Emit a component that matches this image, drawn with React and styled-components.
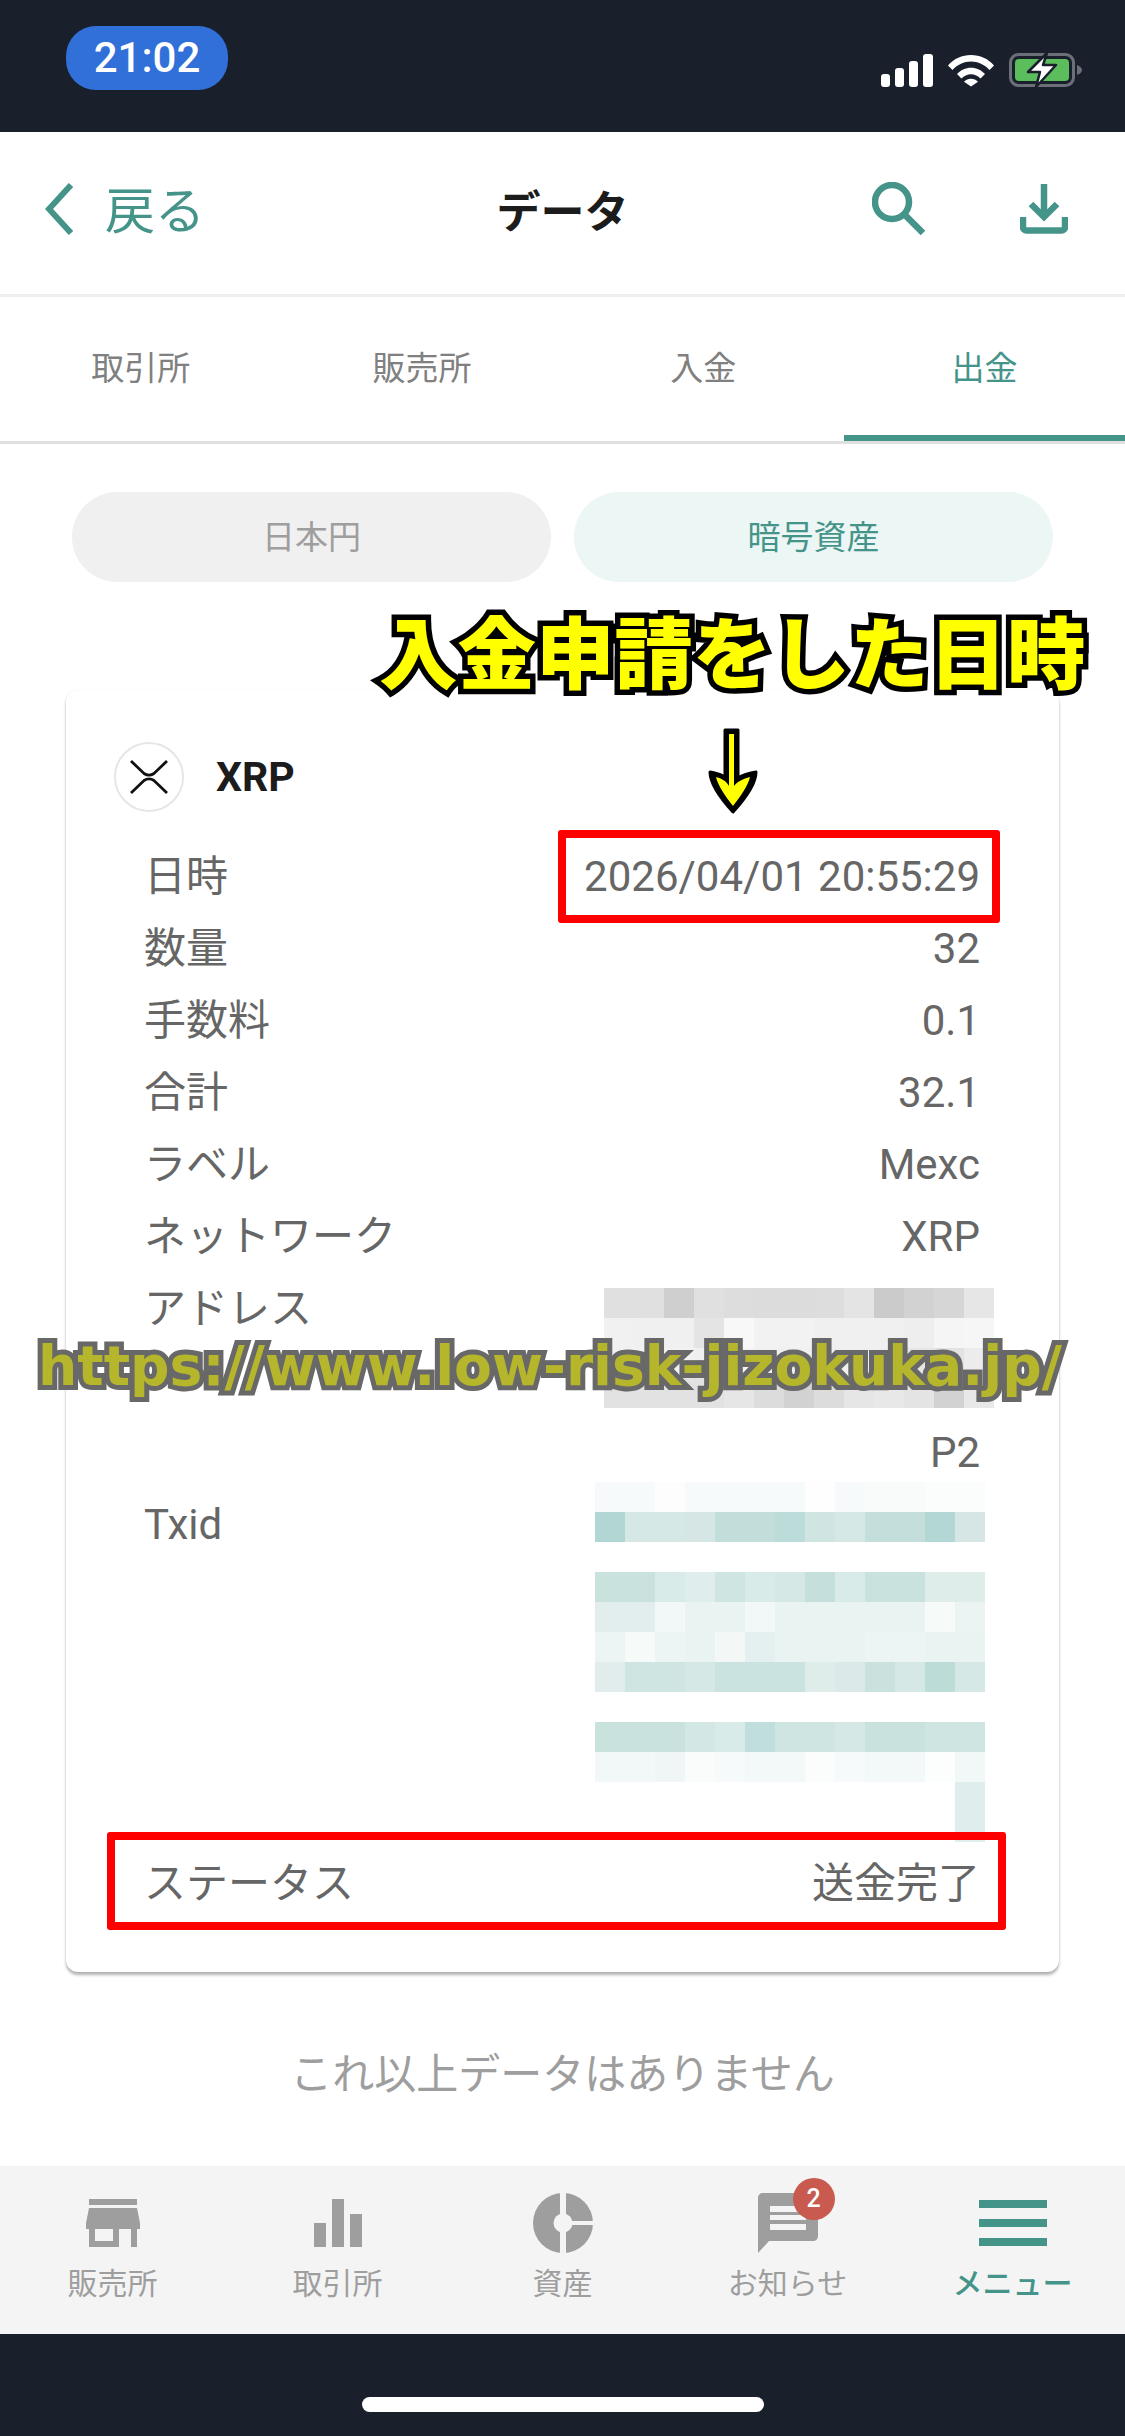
import React from 'react';
import styled, { createGlobalStyle } from 'styled-components';

const TEAL = '#45948a';
const JP = 'Roboto, "Noto Sans CJK JP", sans-serif';

const GlobalStyle = createGlobalStyle`
    html, body {
        margin: 0;
        padding: 0;
        background: #fff;
    }
`;

const addressCells = [
    ['e0e0e0', 'e0e0e0', 'cfcfcf', 'e0e0e0', 'dddddd', 'dcdcdc', 'dcdcdc', 'dddddd', 'e4e4e4', 'cbcbcb', 'd2d2d2', 'd6d6d6', 'e6e6e6'],
    ['f1f1f1', 'f0f0f0', 'f0f0f0', 'e4e4e4', 'f8f8f8', 'f2f2f2', 'f2f2f2', 'f0f0f0', 'f0f0f0', 'f0f0f0', 'eeeeee', 'f5f5f5', 'f6f6f6'],
    ['f2f2f2', 'f2f2f2', 'f2f2f2', 'f0f0f0', 'f4f4f4', 'f0f0f0', 'f0f0f0', 'eeeeee', 'f0f0f0', 'eeeeee', 'e6e6e6', 'e2e2e2', 'ececec'],
    ['e2e2e2', 'e2e2e2', 'e2e2e2', 'e2e2e2', 'e6e6e6', 'dcdcdc', 'd2d2d2', 'dcdcdc', 'e6e6e6', 'e8e8e8', 'e4e4e4', 'd2d2d2', 'e8e8e8'],
];

const txidCells = [
    ['f6fafa', 'f6fafa', 'fdfdfd', 'f6fafa', 'f6fafa', 'f6fafa', 'f6fafa', 'fefefe', 'f6fafa', 'f9fbfb', 'f9fbfb', 'fbfcfc', 'fbfcfc'],
    ['b2d6d3', 'd5e8e6', 'd5e8e6', 'd5e6e4', 'c2dedb', 'c2dedb', 'bcdcda', 'd0e5e2', 'd5e8e6', 'c3dedb', 'c3dedb', 'b3d7d5', 'd5e6e4'],
    null,
    ['c9e2de', 'c9e2de', 'd9ebe9', 'dfeeec', 'cfe5e2', 'd9ebe9', 'd5e8e6', 'c5e0dc', 'd9ebe9', 'c9e2de', 'c9e2de', 'deecea', 'deecea'],
    ['e2eeed', 'e2eeed', 'f2f8f7', 'e9f3f2', 'e9f3f2', 'f2f8f7', 'e9f3f2', 'e9f3f2', 'e9f3f2', 'e9f3f2', 'e9f3f2', 'f6faf9', 'ecf4f3'],
    ['edf5f4', 'f6faf9', 'edf5f4', 'e9f3f2', 'f3f8f7', 'e4f0ef', 'e9f3f2', 'e9f3f2', 'e9f3f2', 'edf5f4', 'edf5f4', 'e9f3f2', 'e9f3f2'],
    ['e0edec', 'cfe5e2', 'cfe5e2', 'd5e8e6', 'cbe3e0', 'cbe3e0', 'cbe3e0', 'deecea', 'dbeae8', 'c9e2de', 'd5e8e6', 'bcdcd8', 'd5e8e6'],
    null,
    ['c9e2de', 'c9e2de', 'c9e2de', 'd3e7e4', 'd9ebe9', 'c0dedb', 'cfe5e2', 'cfe5e2', 'd5e8e6', 'c9e2de', 'c9e2de', 'cfe5e2', 'cfe5e2'],
    ['f2f7f7', 'f2f7f7', 'f0f6f6', 'fafcfc', 'f6fafa', 'f3f8f8', 'f3f8f8', 'fbfdfd', 'f6fafa', 'f3f8f8', 'f3f8f8', 'fcfdfd', 'f2f7f7'],
    ['ffffff', 'ffffff', 'ffffff', 'ffffff', 'ffffff', 'ffffff', 'ffffff', 'ffffff', 'ffffff', 'ffffff', 'ffffff', 'ffffff', 'e0eded'],
    ['ffffff', 'ffffff', 'ffffff', 'ffffff', 'ffffff', 'ffffff', 'ffffff', 'ffffff', 'ffffff', 'ffffff', 'ffffff', 'ffffff', 'e0eded'],
];

const Mosaic = ({ rows, nudge, top }) => (
    <Blur $nudge={nudge} $top={top}>
        {rows.map((row, r) => (
            <BlurRow key={r}>
                {row && row.map((c, i) => <span key={i} style={{ background: `#${c}` }} />)}
            </BlurRow>
        ))}
    </Blur>
);

const details = [
    ['日時', '2026/04/01 20:55:29'],
    ['数量', '32'],
    ['手数料', '0.1'],
    ['合計', '32.1'],
    ['ラベル', 'Mexc'],
    ['ネットワーク', 'XRP'],
];

const App = () => {
    return (
        <Page>
            <GlobalStyle />
            <StatusBar>
                <TimePill>21:02</TimePill>
                <StatusIcons>
                    <svg width="52" height="33" viewBox="0 0 52 33" fill="#fff">
                        <rect x="0" y="20" width="9" height="13" rx="3" />
                        <rect x="14" y="14" width="9" height="19" rx="3" />
                        <rect x="28" y="7" width="9" height="26" rx="3" />
                        <rect x="42" y="0" width="10" height="33" rx="3" />
                    </svg>
                    <svg width="46" height="33" viewBox="0 0 46 33" fill="#fff">
                        <path d="M0 11.5C6 4.5 14 1 23 1s17 3.5 23 10.5l-4.5 4.5C36.500 10.500 30 7.500 23 7.500S9.500 10.500 4.500 16z" />
                        <path d="M9 20c3.500-4 8.500-6.300 14-6.300s10.500 2.300 14 6.300l-4.500 4.500c-2.500-2.700-5.800-4.300-9.500-4.300s-7 1.600-9.500 4.300z" />
                        <path d="M16 28.300c1.800-2 4.300-3 7-3s5.200 1 7 3L23 33z" transform="translate(0 -0.500)" />
                    </svg>
                    <svg width="74" height="36" viewBox="0 0 74 36">
                        <rect x="1.500" y="2.500" width="63" height="31" rx="8" fill="none" stroke="#6b6f78" strokeWidth="3" />
                        <rect x="6" y="7" width="54" height="22" rx="4" fill="#5cbd5c" />
                        <path d="M68 13c3 1 5 3 5 5s-2 4-5 5z" fill="#6b6f78" />
                        <path d="M38 1L19 20h12l-4 15 20-22H34z" fill="#fff" stroke="#1a1f2c" strokeWidth="2.500" strokeLinejoin="round" />
                    </svg>
                </StatusIcons>
            </StatusBar>

            <Header>
                <Back>
                    <svg width="28" height="52" viewBox="0 0 28 52" fill="none" stroke={TEAL} strokeWidth="6">
                        <path d="M26 2L4 26l22 24" />
                    </svg>
                    <BackLabel>戻る</BackLabel>
                </Back>
                <Title>データ</Title>
                <HeaderActions>
                    <svg width="54" height="54" viewBox="0 0 54 54" fill="none" stroke={TEAL} strokeWidth="6.500">
                        <circle cx="20" cy="20" r="17" />
                        <path d="M32 32l19 19" />
                    </svg>
                    <svg width="48" height="50" viewBox="0 0 48 50" fill="none" stroke={TEAL} strokeWidth="6.500">
                        <path d="M24 0v32" />
                        <path d="M11 20l13 13 13-13" />
                        <path d="M3 33v10c0 2 1.500 3.500 3.500 3.500h35c2 0 3.500-1.500 3.500-3.500V33" />
                    </svg>
                </HeaderActions>
            </Header>

            <Tabs>
                <Tab>取引所</Tab>
                <Tab>販売所</Tab>
                <Tab>入金</Tab>
                <Tab $active>出金</Tab>
            </Tabs>

            <Content>
                <Pills>
                    <Pill>日本円</Pill>
                    <Pill $active>暗号資産</Pill>
                </Pills>

                <Card>
                    <CoinRow>
                        <CoinLogo>
                            <svg width="38" height="34" viewBox="0 0 38 34" fill="none" stroke="#111" strokeWidth="2.800">
                                <path d="M1 1l13 12.500c3 2 7 2 10 0L37 1" />
                                <path d="M1 33l13-12.500c3-2 7-2 10 0L37 33" />
                            </svg>
                        </CoinLogo>
                        <CoinName>XRP</CoinName>
                    </CoinRow>

                    {details.map(([label, value]) => (
                        <Row key={label}>
                            <span>{label}</span>
                            <span>{value}</span>
                        </Row>
                    ))}

                    <Row $height={144}>
                        <span>アドレス</span>
                        <Mosaic rows={addressCells} nudge={-14} top={15} />
                    </Row>
                    <Row>
                        <span />
                        <span>P2</span>
                    </Row>
                    <Row $height={359}>
                        <span>Txid</span>
                        <Mosaic rows={txidCells} nudge={-5} top={-7} />
                    </Row>
                    <Row>
                        <span>ステータス</span>
                        <span>送金完了</span>
                    </Row>
                </Card>

                <EndNote>これ以上データはありません</EndNote>
            </Content>

            <BottomNav>
                <NavItem>
                    <NavIcon>
                        <svg width="54" height="48" viewBox="0 0 54 48" fill="#9e9e9e">
                            <rect x="3" y="0" width="48" height="6" />
                            <path d="M3 9h48l3 15v6H0v-6z" />
                            <path d="M3 30h6v12h18V30h6v18H3zM45 30h6v18h-6z" />
                        </svg>
                    </NavIcon>
                    <NavLabel>販売所</NavLabel>
                </NavItem>
                <NavItem>
                    <NavIcon>
                        <svg width="48" height="48" viewBox="0 0 48 48" fill="#9e9e9e">
                            <rect x="0" y="24" width="12" height="24" />
                            <rect x="18" y="0" width="12" height="48" />
                            <rect x="36" y="15" width="12" height="33" />
                        </svg>
                    </NavIcon>
                    <NavLabel>取引所</NavLabel>
                </NavItem>
                <NavItem>
                    <NavIcon>
                        <svg width="60" height="60" viewBox="0 0 60 60">
                            <circle cx="30" cy="30" r="30" fill="#9e9e9e" />
                            <path d="M27 0h6v60h-6zM30 28h30v4H30z" fill="#f4f4f4" />
                            <circle cx="30" cy="30" r="9.500" fill="#f4f4f4" />
                        </svg>
                    </NavIcon>
                    <NavLabel>資産</NavLabel>
                </NavItem>
                <NavItem>
                    <NavIcon>
                        <svg width="60" height="60" viewBox="0 0 60 60">
                            <path d="M5 0h50c3 0 5 2 5 5v38c0 3-2 5-5 5H11L0 60V5c0-3 2-5 5-5z" fill="#9e9e9e" />
                            <path d="M12 13h36v6H12zM12 22h36v5H12zM12 31h36v6H12z" fill="#f4f4f4" />
                        </svg>
                        <Badge>2</Badge>
                    </NavIcon>
                    <NavLabel>お知らせ</NavLabel>
                </NavItem>
                <NavItem>
                    <NavIcon>
                        <svg width="68" height="46" viewBox="0 0 68 46" fill={TEAL}>
                            <rect x="0" y="0" width="68" height="8" />
                            <rect x="0" y="19" width="68" height="8" />
                            <rect x="0" y="38" width="68" height="8" />
                        </svg>
                    </NavIcon>
                    <NavLabel $active>メニュー</NavLabel>
                </NavItem>
            </BottomNav>

            <SafeArea>
                <HomeBar />
            </SafeArea>

            <Caption>入金申請をした日時</Caption>
            <CaptionArrow>
                <svg width="52" height="88" viewBox="0 0 52 88">
                    <path d="M18 3h13v48c3-2 8-4 18-6 0 12-12 28-23 40C15 73 3 57 3 45c10 2 15 4 15 6z" fill="#000" stroke="#000" strokeWidth="3" strokeLinejoin="round" />
                    <path d="M22 7h5v52c4-5 9-7 16-9-2 9-10 20-17 29C19 70 11 59 9 50c7 2 10 4 13 9z" fill="#ff0" />
                </svg>
            </CaptionArrow>
            <Highlight $x={558} $y={830} $w={442} $h={93} />
            <Highlight $x={107} $y={1832} $w={899} $h={98} />
            <Watermark>https://www.low-risk-jizokuka.jp/</Watermark>
        </Page>
    );
};

const Page = styled.div`
    position: relative;
    width: 1125px;
    height: 2436px;
    display: flex;
    flex-direction: column;
    overflow: hidden;
    font-family: ${JP};
    background: #fff;
`;

const StatusBar = styled.div`
    height: 132px;
    flex: none;
    box-sizing: border-box;
    background: #1a1f2c;
    padding: 26px 42px 0 66px;
    display: flex;
    justify-content: space-between;
    align-items: flex-start;
`;

const TimePill = styled.div`
    width: 162px;
    height: 64px;
    border-radius: 30px;
    background: #3070d8;
    color: #fff;
    font-size: 42px;
    font-weight: 500;
    line-height: 64px;
    text-align: center;
`;

const StatusIcons = styled.div`
    display: flex;
    align-items: center;
    gap: 15px;
    margin-top: 26px;
`;

const Header = styled.div`
    height: 165px;
    flex: none;
    box-sizing: border-box;
    border-bottom: 3px solid #eeeeee;
    padding: 0 45px 8px;
    display: grid;
    grid-template-columns: 1fr auto 1fr;
    align-items: center;
`;

const Back = styled.div`
    display: flex;
    align-items: center;
    gap: 32px;
    color: ${TEAL};
    font-size: 50px;
`;

const BackLabel = styled.span`
    margin-bottom: 5px;
`;

const Title = styled.div`
    color: #1c1c1c;
    font-size: 44px;
    font-weight: 700;
`;

const HeaderActions = styled.div`
    display: flex;
    justify-content: flex-end;
    align-items: center;
    gap: 94px;
    margin-right: 12px;
`;

const Tabs = styled.div`
    height: 147px;
    flex: none;
    box-sizing: border-box;
    border-bottom: 3px solid #e0e0e0;
    display: grid;
    grid-template-columns: repeat(4, 1fr);
`;

const Tab = styled.div`
    display: flex;
    align-items: center;
    justify-content: center;
    font-size: 33px;
    color: ${p => (p.$active ? TEAL : '#808080')};
    border-bottom: 6px solid ${p => (p.$active ? TEAL : 'transparent')};
`;

const Content = styled.div`
    flex: 1;
    min-height: 0;
    padding: 48px 66px 0;
`;

const Pills = styled.div`
    display: flex;
    gap: 23px;
    padding: 0 6px;
`;

const Pill = styled.div`
    flex: 1;
    height: 90px;
    box-sizing: border-box;
    padding-bottom: 5px;
    border-radius: 45px;
    display: flex;
    align-items: center;
    justify-content: center;
    font-size: 33px;
    background: ${p => (p.$active ? '#ecf6f4' : '#f0f0f0')};
    color: ${p => (p.$active ? TEAL : '#9e9e9e')};
`;

const Card = styled.div`
    margin-top: 108px;
    padding: 52px 79px 52px 78px;
    box-sizing: border-box;
    height: 1282px;
    border-radius: 12px;
    background: #fff;
    box-shadow: 0 3px 3px rgba(0, 0, 0, 0.3), 0 0 2px rgba(0, 0, 0, 0.06);
`;

const CoinRow = styled.div`
    display: flex;
    align-items: center;
    gap: 32px;
    margin: 0 0 29px -30px;
`;

const CoinLogo = styled.div`
    width: 70px;
    height: 70px;
    box-sizing: border-box;
    border: 2px solid #e6e6e6;
    border-radius: 50%;
    display: flex;
    align-items: center;
    justify-content: center;
`;

const CoinName = styled.div`
    color: #1c1c1c;
    font-size: 41px;
    font-weight: 700;
`;

const Row = styled.div`
    height: ${p => p.$height || 72}px;
    display: flex;
    justify-content: space-between;
    align-items: flex-start;
    color: #666;
    font-size: 42px;
    line-height: 72px;
`;

const Blur = styled.div`
    width: 390px;
    margin-top: ${p => p.$top}px;
    margin-right: ${p => p.$nudge}px;
`;

const BlurRow = styled.div`
    height: 30px;
    display: grid;
    grid-template-columns: repeat(13, 30px);

    & > span {
        display: block;
        height: 30px;
    }
`;

const EndNote = styled.div`
    margin-top: 76px;
    text-align: center;
    color: #9e9e9e;
    font-size: 42px;
    line-height: 54px;
`;

const BottomNav = styled.div`
    height: 168px;
    flex: none;
    background: #f4f4f4;
    display: grid;
    grid-template-columns: repeat(5, 225px);
`;

const NavItem = styled.div`
    display: flex;
    flex-direction: column;
    align-items: center;
    padding-top: 27px;
`;

const NavIcon = styled.div`
    position: relative;
    height: 60px;
    display: flex;
    align-items: center;
    justify-content: center;
`;

const NavLabel = styled.div`
    margin-top: 11px;
    font-size: 30px;
    font-weight: ${p => (p.$active ? 500 : 400)};
    line-height: 40px;
    color: ${p => (p.$active ? TEAL : '#9e9e9e')};
`;

const Badge = styled.div`
    position: absolute;
    top: -15px;
    right: -17px;
    width: 42px;
    height: 42px;
    border-radius: 50%;
    background: #c85a50;
    color: #fff;
    font-size: 25px;
    font-weight: 500;
    line-height: 42px;
    text-align: center;
`;

const SafeArea = styled.div`
    height: 102px;
    flex: none;
    box-sizing: border-box;
    background: #1a1f2c;
    display: flex;
    justify-content: center;
    padding-top: 63px;
`;

const HomeBar = styled.div`
    width: 402px;
    height: 15px;
    border-radius: 8px;
    background: #fff;
`;

const Caption = styled.div`
    position: absolute;
    left: 379px;
    top: 601px;
    font-family: "Noto Sans CJK JP", sans-serif;
    font-size: 78.500px;
    font-weight: 900;
    line-height: 96px;
    white-space: nowrap;
    color: #ffff00;
    -webkit-text-stroke: 11px #000;
    paint-order: stroke fill;
`;

const CaptionArrow = styled.div`
    position: absolute;
    left: 707px;
    top: 727px;
    line-height: 0;
`;

const Highlight = styled.div`
    position: absolute;
    left: ${p => p.$x}px;
    top: ${p => p.$y}px;
    width: ${p => p.$w}px;
    height: ${p => p.$h}px;
    box-sizing: border-box;
    border: 8px solid #ff0000;
    border-radius: 3px;
`;

const Watermark = styled.div`
    position: absolute;
    left: 38px;
    top: 1330px;
    font-family: "DejaVu Sans", sans-serif;
    font-size: 55.200px;
    font-weight: 700;
    line-height: 72px;
    white-space: nowrap;
    color: #b6b62c;
    -webkit-text-stroke: 10px #686868;
    paint-order: stroke fill;
`;

export default App;
